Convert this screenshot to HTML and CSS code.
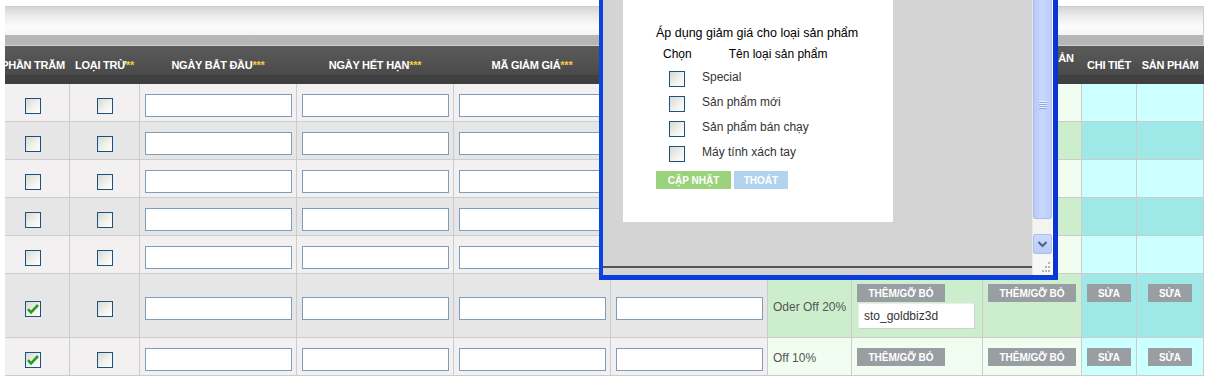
FILE: index.html
```html
<!DOCTYPE html>
<html lang="vi">
<head>
<meta charset="utf-8">
<title>Giảm giá</title>
<link rel="stylesheet" href="styles.css">
</head>
<body>
<div class="page">
  <div class="scroller">
    <div class="inner">
      <div class="topbar"></div>
      <div class="head">
        <div class="h">PHẦN TRĂM</div>
        <div class="h">LOẠI TRỪ<span class="req">**</span></div>
        <div class="h">NGÀY BẮT ĐẦU<span class="req">***</span></div>
        <div class="h">NGÀY HẾT HẠN<span class="req">***</span></div>
        <div class="h">MÃ GIẢM GIÁ<span class="req">***</span></div>
        <div class="h"></div>
        <div class="h"></div>
        <div class="h"></div>
        <div class="h">DANH MỤC SẢN<br>PHẨM</div>
        <div class="h">CHI TIẾT</div>
        <div class="h">SẢN PHẨM</div>
      </div>
      <div class="body">
        <div class="row o">
          <div class="c"><span class="cb"></span></div>
          <div class="c"><span class="cb"></span></div>
          <div class="c inp"><input class="ti" type="text"></div>
          <div class="c inp"><input class="ti" type="text"></div>
          <div class="c inp"><input class="ti" type="text"></div>
          <div class="c inp"><input class="ti" type="text"></div>
          <div class="c g"></div><div class="c g"></div><div class="c g"></div>
          <div class="c y"></div><div class="c y"></div>
        </div>
        <div class="row e">
          <div class="c"><span class="cb"></span></div>
          <div class="c"><span class="cb"></span></div>
          <div class="c inp"><input class="ti" type="text"></div>
          <div class="c inp"><input class="ti" type="text"></div>
          <div class="c inp"><input class="ti" type="text"></div>
          <div class="c inp"><input class="ti" type="text"></div>
          <div class="c g"></div><div class="c g"></div><div class="c g"></div>
          <div class="c y"></div><div class="c y"></div>
        </div>
        <div class="row o">
          <div class="c"><span class="cb"></span></div>
          <div class="c"><span class="cb"></span></div>
          <div class="c inp"><input class="ti" type="text"></div>
          <div class="c inp"><input class="ti" type="text"></div>
          <div class="c inp"><input class="ti" type="text"></div>
          <div class="c inp"><input class="ti" type="text"></div>
          <div class="c g"></div><div class="c g"></div><div class="c g"></div>
          <div class="c y"></div><div class="c y"></div>
        </div>
        <div class="row e">
          <div class="c"><span class="cb"></span></div>
          <div class="c"><span class="cb"></span></div>
          <div class="c inp"><input class="ti" type="text"></div>
          <div class="c inp"><input class="ti" type="text"></div>
          <div class="c inp"><input class="ti" type="text"></div>
          <div class="c inp"><input class="ti" type="text"></div>
          <div class="c g"></div><div class="c g"></div><div class="c g"></div>
          <div class="c y"></div><div class="c y"></div>
        </div>
        <div class="row o">
          <div class="c"><span class="cb"></span></div>
          <div class="c"><span class="cb"></span></div>
          <div class="c inp"><input class="ti" type="text"></div>
          <div class="c inp"><input class="ti" type="text"></div>
          <div class="c inp"><input class="ti" type="text"></div>
          <div class="c inp"><input class="ti" type="text"></div>
          <div class="c g"></div><div class="c g"></div><div class="c g"></div>
          <div class="c y"></div><div class="c y"></div>
        </div>
        <div class="row e">
          <div class="c"><span class="cb"><svg width="14" height="14" viewBox="0 0 14 14"><path d="M2 7.2 L5 10.3 L12 3" fill="none" stroke="#22a022" stroke-width="2.6"/></svg></span></div>
          <div class="c"><span class="cb"></span></div>
          <div class="c inp"><input class="ti" type="text"></div>
          <div class="c inp"><input class="ti" type="text"></div>
          <div class="c inp"><input class="ti" type="text"></div>
          <div class="c inp"><input class="ti" type="text"></div>
          <div class="c g tx">Oder Off 20%</div>
          <div class="c g bt stack"><span class="btn wide">THÊM/GỠ BỎ</span><input class="code" type="text" value="sto_goldbiz3d"></div>
          <div class="c g bt"><span class="btn wide">THÊM/GỠ BỎ</span></div>
          <div class="c y bt"><span class="btn sm">SỬA</span></div>
          <div class="c y bt"><span class="btn sm">SỬA</span></div>
        </div>
        <div class="row o">
          <div class="c"><span class="cb"><svg width="14" height="14" viewBox="0 0 14 14"><path d="M2 7.2 L5 10.3 L12 3" fill="none" stroke="#22a022" stroke-width="2.6"/></svg></span></div>
          <div class="c"><span class="cb"></span></div>
          <div class="c inp"><input class="ti" type="text"></div>
          <div class="c inp"><input class="ti" type="text"></div>
          <div class="c inp"><input class="ti" type="text"></div>
          <div class="c inp"><input class="ti" type="text"></div>
          <div class="c g tx">Off 10%</div>
          <div class="c g bt stack"><span class="btn wide">THÊM/GỠ BỎ</span></div>
          <div class="c g bt"><span class="btn wide">THÊM/GỠ BỎ</span></div>
          <div class="c y bt"><span class="btn sm">SỬA</span></div>
          <div class="c y bt"><span class="btn sm">SỬA</span></div>
        </div>
      </div>
    </div>
  </div>

  <div class="popup">
    <div class="pmain">
      <div class="pcontent">
        <div class="pbox">
          <div class="ptitle">Áp dụng giảm giá cho loại sản phẩm</div>
          <div class="pcols"><span class="pc1">Chọn</span><span class="pc2">Tên loại sản phẩm</span></div>
          <div class="plist">
            <div class="pitem"><span class="cb"></span><span class="plabel">Special</span></div>
            <div class="pitem"><span class="cb"></span><span class="plabel">Sản phẩm mới</span></div>
            <div class="pitem"><span class="cb"></span><span class="plabel">Sản phẩm bán chạy</span></div>
            <div class="pitem"><span class="cb"></span><span class="plabel">Máy tính xách tay</span></div>
          </div>
          <div class="pbtns"><span class="pbtn ok">CẬP NHẬT</span><span class="pbtn cancel">THOÁT</span></div>
        </div>
      </div>
      <div class="pline"></div>
    </div>
    <div class="pscroll">
      <div class="thumb"><span class="grip"></span></div>
      <div class="track"></div>
      <div class="sbtn"><svg width="17" height="18" viewBox="0 0 17 18"><path d="M4.5 7 L8.5 11 L12.5 7" fill="none" stroke="#4d6185" stroke-width="2"/></svg></div>
      <div class="corner"><svg width="10" height="12" viewBox="0 0 10 12"><g fill="#b9b5a8"><rect x="7" y="1" width="2" height="2"/><rect x="4" y="5" width="2" height="2"/><rect x="7" y="5" width="2" height="2"/><rect x="1" y="9" width="2" height="2"/><rect x="4" y="9" width="2" height="2"/><rect x="7" y="9" width="2" height="2"/></g></svg></div>
    </div>
  </div>
</div>
</body>
</html>
```

FILE: styles.css
```css
* { box-sizing: border-box; }
html, body { margin: 0; padding: 0; background: #fff; }
body { font-family: "Liberation Sans", Arial, sans-serif; font-size: 12px; color: #333; }

.page { position: relative; width: 1213px; height: 391px; overflow: hidden; padding-top: 6px; }

.scroller { margin-left: 5px; width: 1199px; overflow: hidden; }
.inner { margin-left: -8px; width: 1207px; }

.topbar {
  height: 40px;
  border-top: 1px solid #cdcdcd;
  border-right: 1px solid #cdcdcd;
  background: linear-gradient(to bottom, #d6d6d6 0, #ebebeb 9px, #fdfdfd 20px, #f3f3f3 28px, #b6b6b6 28px, #b6b6b6 38px, #d2d2d2 38px);
}

.head, .body {
  display: grid;
  grid-template-columns: 72px 69px 156px 156px 156px 156px 83px 130px 98px 54px 66px;
  column-gap: 1px;
}
.head {
  height: 38px;
  padding-right: 1px;
  background: linear-gradient(to bottom, #5b5b5b 0, #4a4a4a 29px, #3a3a3a 30px, #424242 31px, #3e3e3e 38px);
}
.h {
  display: flex;
  align-items: center;
  justify-content: center;
  text-align: center;
  color: #fff;
  font-weight: bold;
  font-size: 11px;
  line-height: 13px;
  letter-spacing: -0.25px;
  white-space: nowrap;
}
.req { color: #f6c84a; }

.body {
  row-gap: 1px;
  grid-template-rows: 37px 37px 37px 37px 37px 63px 37px;
  background: #cccccc;
  padding: 0 1px 1px 0;
}
.row { display: contents; }
.c {
  display: flex;
  align-items: center;
  justify-content: center;
  padding-top: 6px;
}
.row.o > .c { background: #f2f0f0; }
.row.e > .c { background: #e6e6e6; }
.row.o > .g { background: #f0fdf0; }
.row.e > .g { background: #cdeecd; }
.row.o > .y { background: #ccffff; }
.row.e > .y { background: #9ee8e8; }

.inp { justify-content: flex-start; padding-left: 5px; }
.ti {
  width: 147px;
  height: 23px;
  margin: 0;
  padding: 0;
  border: 1px solid #7f9db9;
  background: #fff;
  outline: none;
}

.cb {
  display: flex;
  width: 16px;
  height: 16px;
  border: 1px solid #1c5180;
  background: linear-gradient(135deg, #d9d9d3 0, #f3f3ef 60%, #fdfdfb 100%);
}
.cb svg { display: block; }

.tx { justify-content: flex-start; padding: 2px 0 0 5px; color: #555; font-size: 12px; }
.bt { align-items: flex-start; padding-top: 10px; }
.stack { flex-direction: column; justify-content: flex-start; align-items: flex-start; padding-left: 5px; }

.btn {
  display: flex;
  align-items: center;
  justify-content: center;
  height: 18px;
  background: #999ea2;
  color: #fff;
  font-weight: bold;
  font-size: 10px;
  white-space: nowrap;
}
.wide { width: 88px; }
.sm { width: 44px; }

.code {
  width: 117px;
  height: 26px;
  margin: 1px 0 0 1px;
  padding: 0 0 0 5px;
  border: 1px solid;
  border-color: #ececec #cfcfcf #cfcfcf #ececec;
  background: #fff;
  font-family: "Liberation Sans", Arial, sans-serif;
  font-size: 12px;
  color: #333;
  outline: none;
}

/* popup window */
.popup {
  position: absolute;
  left: 599px;
  top: 0;
  width: 459px;
  height: 280px;
  display: flex;
  border-left: 4px solid #0b45e0;
  border-right: 5px solid #0a34d2;
  border-bottom: 5px solid #0a3edb;
  z-index: 5;
}
.pmain { width: 429px; background: #d4d4d4; display: flex; flex-direction: column; }
.pcontent { height: 266px; padding-left: 20px; }
.pbox {
  width: 270px;
  height: 222px;
  background: #fff;
  padding: 26px 0 0 33px;
  color: #000;
}
.ptitle { font-size: 12.5px; line-height: 15px; white-space: nowrap; }
.pcols { display: flex; margin-top: 6px; line-height: 15px; font-size: 12px; }
.pc1 { margin-left: 7px; }
.pc2 { margin-left: 37px; }
.plist { display: flex; flex-direction: column; gap: 9px; margin-top: 9px; padding-left: 13px; }
.pitem { display: flex; align-items: flex-start; height: 16px; }
.plabel { margin-left: 17px; margin-top: -1px; line-height: 14px; color: #333; font-size: 12px; white-space: nowrap; }
.pbtns { display: flex; gap: 3px; margin-top: 9px; }
.pbtn {
  display: flex;
  align-items: center;
  justify-content: center;
  height: 18px;
  color: #fff;
  font-weight: bold;
  font-size: 10px;
}
.ok { width: 75px; background: #9bd37c; }
.cancel { width: 54px; background: #b2d3ee; }
.pline { height: 2px; background: #555; }

.pscroll {
  width: 21px;
  display: flex;
  flex-direction: column;
  background: #f4f3ee;
  border-left: 1px solid #ebeae2;
  border-right: 1px solid #fff;
}
.thumb {
  height: 219px;
  display: flex;
  justify-content: center;
  background: linear-gradient(to right, #b7caf8, #c7d7fd 45%, #bccdf8);
  border: 1px solid #a9bdf0;
  border-top: none;
  border-radius: 0 0 3px 3px;
}
.grip {
  width: 8px;
  height: 8px;
  margin-top: 101px;
  background: repeating-linear-gradient(to bottom, #eef3ff 0 1px, #8ca7ea 1px 2px);
}
.track { height: 15px; }
.sbtn {
  height: 20px;
  display: flex;
  align-items: center;
  justify-content: center;
  background: linear-gradient(to bottom, #cbdafd, #b9ccf8);
  border: 1px solid #abc0f0;
  border-radius: 2px;
}
.sbtn svg { display: block; }
.corner {
  flex: 1;
  display: flex;
  align-items: flex-end;
  justify-content: flex-end;
  padding: 0 1px 2px 0;
  background: #f7f7f5;
}
.corner svg { display: block; }
```
